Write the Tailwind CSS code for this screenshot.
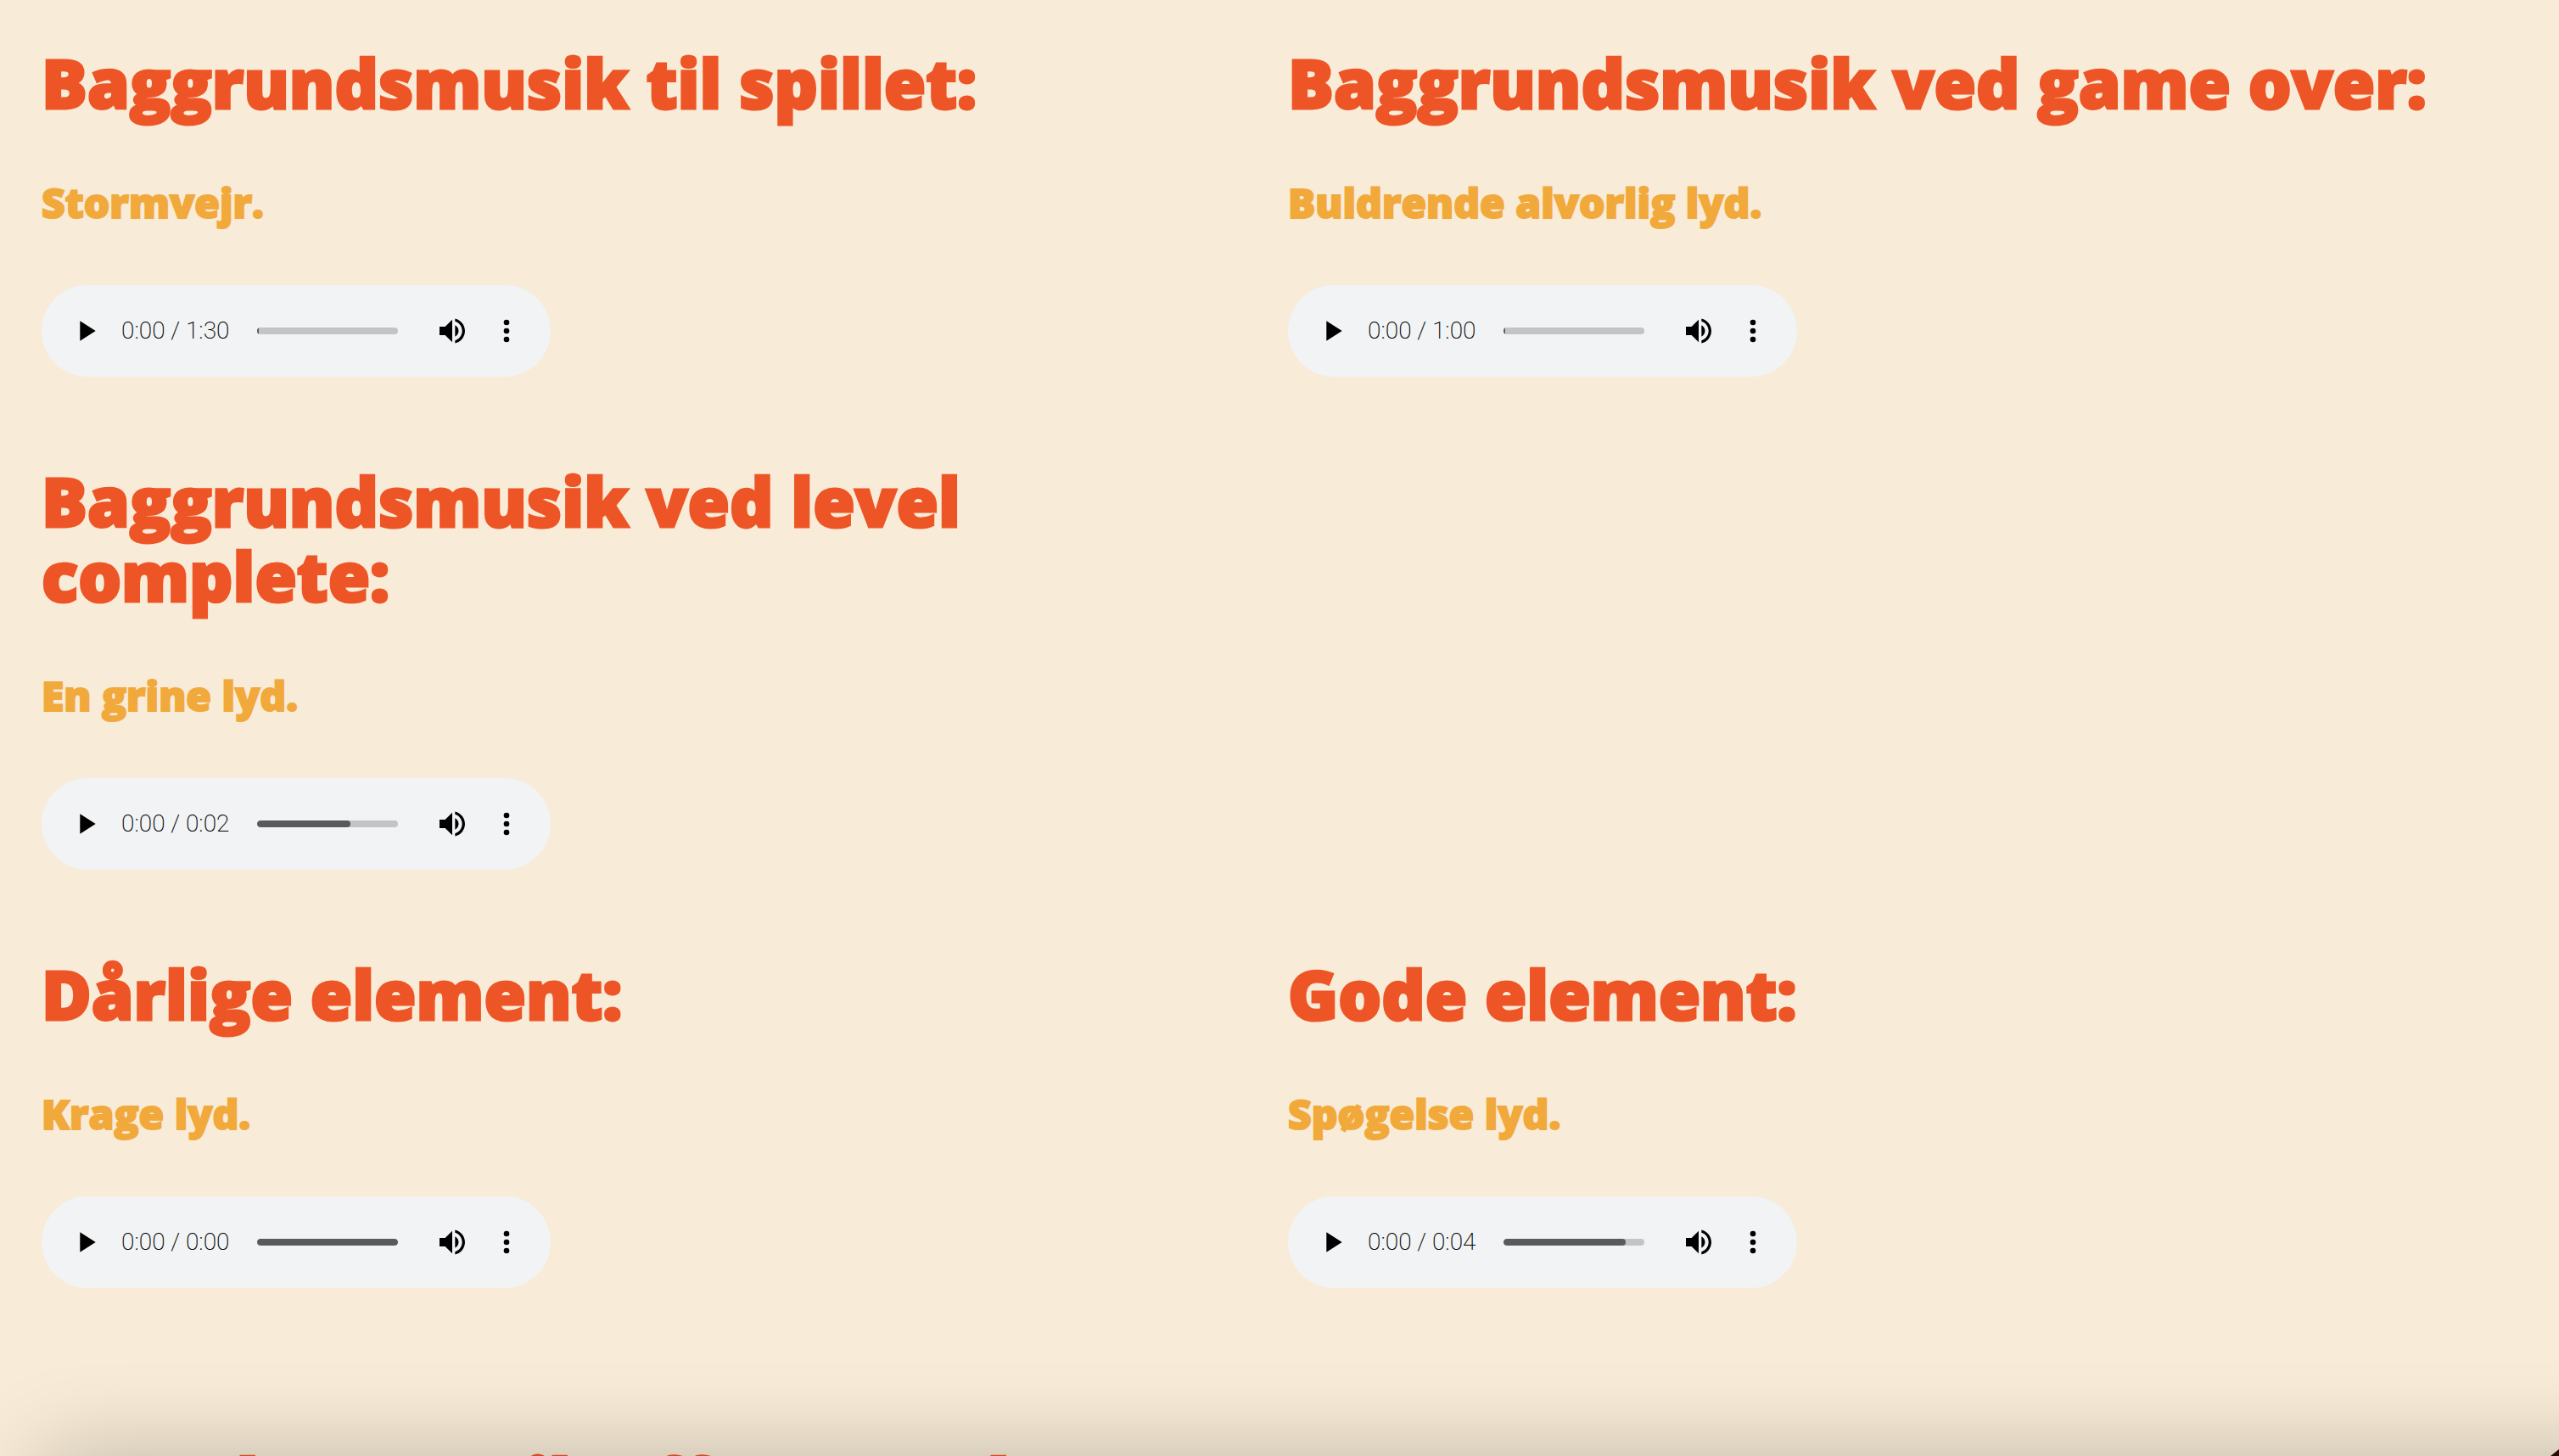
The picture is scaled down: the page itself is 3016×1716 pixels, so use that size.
<!DOCTYPE html>
<html lang="da">
<head>
<meta charset="utf-8">
<title>Lyde</title>
<script src="https://cdn.jsdelivr.net/npm/@tailwindcss/browser@4"></script>
</head>
<body class="bg-[#f8ebd7]">
<svg class="hidden" aria-hidden="true">
  <symbol id="play" viewBox="0 0 24 24"><path d="M8 5v14l11-7z"/></symbol>
  <symbol id="volume" viewBox="0 0 24 24"><path d="M3 9v6h4l5 5V4L7 9H3zm13.5 3c0-1.77-1.02-3.29-2.5-4.03v8.05c1.48-.73 2.5-2.25 2.5-4.02zM14 3.23v2.06c2.89.86 5 3.54 5 6.71s-2.11 5.85-5 6.71v2.06c4.01-.91 7-4.49 7-8.77s-2.99-7.86-7-8.77z"/></symbol>
  <symbol id="more" viewBox="0 0 24 24"><circle cx="12" cy="6" r="2"/><circle cx="12" cy="12" r="2"/><circle cx="12" cy="18" r="2"/></symbol>
</svg>

<main class="relative flex h-screen flex-col gap-[102px] overflow-hidden px-[49px] pt-[53px] font-['Open_Sans',sans-serif] font-extrabold">
  <div class="grid shrink-0 grid-cols-2 gap-x-5">
    <section>
      <h2 class="text-[80px] leading-[88px] text-[#ee5526] [-webkit-text-stroke:3px_#ee5526]">Baggrundsmusik til spillet:</h2>
      <p class="mt-[70px] text-[48px] leading-14 text-[#f2a93b] [-webkit-text-stroke:2px_#f2a93b]">Stormvejr.</p>
      <div class="mt-[69px] flex h-27 w-150 items-center rounded-full bg-[#f1f3f4] px-8">
        <button aria-label="Afspil"><svg class="size-10"><use href="#play"/></svg></button>
        <span class="ml-[22px] w-32 whitespace-nowrap font-[Roboto,sans-serif] text-[28px] font-extralight">0:00 / 1:30</span>
        <div class="relative ml-8 h-2 flex-1 overflow-hidden rounded-full bg-[#c3c4c5]">
          <div class="h-full bg-[#5a5a5a]" style="width:1%"></div>
          <input type="range" value="0" aria-label="Position" class="absolute inset-0 w-full opacity-0">
        </div>
        <button class="ml-11" aria-label="Lydstyrke"><svg class="size-10"><use href="#volume"/></svg></button>
        <button class="ml-6" aria-label="Flere valg"><svg class="size-10"><use href="#more"/></svg></button>
      </div>
    </section>
    <section>
      <h2 class="text-[80px] leading-[88px] text-[#ee5526] [-webkit-text-stroke:3px_#ee5526]">Baggrundsmusik ved game over:</h2>
      <p class="mt-[70px] text-[48px] leading-14 text-[#f2a93b] [-webkit-text-stroke:2px_#f2a93b]">Buldrende alvorlig lyd.</p>
      <div class="mt-[69px] flex h-27 w-150 items-center rounded-full bg-[#f1f3f4] px-8">
        <button aria-label="Afspil"><svg class="size-10"><use href="#play"/></svg></button>
        <span class="ml-[22px] w-32 whitespace-nowrap font-[Roboto,sans-serif] text-[28px] font-extralight">0:00 / 1:00</span>
        <div class="relative ml-8 h-2 flex-1 overflow-hidden rounded-full bg-[#c3c4c5]">
          <div class="h-full bg-[#5a5a5a]" style="width:1%"></div>
          <input type="range" value="0" aria-label="Position" class="absolute inset-0 w-full opacity-0">
        </div>
        <button class="ml-11" aria-label="Lydstyrke"><svg class="size-10"><use href="#volume"/></svg></button>
        <button class="ml-6" aria-label="Flere valg"><svg class="size-10"><use href="#more"/></svg></button>
      </div>
    </section>
  </div>

  <div class="grid shrink-0 grid-cols-2 gap-x-5">
    <section>
      <h2 class="text-[80px] leading-[88px] text-[#ee5526] [-webkit-text-stroke:3px_#ee5526]">Baggrundsmusik ved level complete:</h2>
      <p class="mt-[70px] text-[48px] leading-14 text-[#f2a93b] [-webkit-text-stroke:2px_#f2a93b]">En grine lyd.</p>
      <div class="mt-[69px] flex h-27 w-150 items-center rounded-full bg-[#f1f3f4] px-8">
        <button aria-label="Afspil"><svg class="size-10"><use href="#play"/></svg></button>
        <span class="ml-[22px] w-32 whitespace-nowrap font-[Roboto,sans-serif] text-[28px] font-extralight">0:00 / 0:02</span>
        <div class="relative ml-8 h-2 flex-1 overflow-hidden rounded-full bg-[#c3c4c5]">
          <div class="h-full rounded-full bg-[#5a5a5a]" style="width:66%"></div>
          <input type="range" value="0" aria-label="Position" class="absolute inset-0 w-full opacity-0">
        </div>
        <button class="ml-11" aria-label="Lydstyrke"><svg class="size-10"><use href="#volume"/></svg></button>
        <button class="ml-6" aria-label="Flere valg"><svg class="size-10"><use href="#more"/></svg></button>
      </div>
    </section>
  </div>

  <div class="grid shrink-0 grid-cols-2 gap-x-5">
    <section>
      <h2 class="text-[80px] leading-[88px] text-[#ee5526] [-webkit-text-stroke:3px_#ee5526]">Dårlige element:</h2>
      <p class="mt-[70px] text-[48px] leading-14 text-[#f2a93b] [-webkit-text-stroke:2px_#f2a93b]">Krage lyd.</p>
      <div class="mt-[69px] flex h-27 w-150 items-center rounded-full bg-[#f1f3f4] px-8">
        <button aria-label="Afspil"><svg class="size-10"><use href="#play"/></svg></button>
        <span class="ml-[22px] w-32 whitespace-nowrap font-[Roboto,sans-serif] text-[28px] font-extralight">0:00 / 0:00</span>
        <div class="relative ml-8 h-2 flex-1 overflow-hidden rounded-full bg-[#c3c4c5]">
          <div class="h-full rounded-full bg-[#5a5a5a]" style="width:100%"></div>
          <input type="range" value="0" aria-label="Position" class="absolute inset-0 w-full opacity-0">
        </div>
        <button class="ml-11" aria-label="Lydstyrke"><svg class="size-10"><use href="#volume"/></svg></button>
        <button class="ml-6" aria-label="Flere valg"><svg class="size-10"><use href="#more"/></svg></button>
      </div>
    </section>
    <section>
      <h2 class="text-[80px] leading-[88px] text-[#ee5526] [-webkit-text-stroke:3px_#ee5526]">Gode element:</h2>
      <p class="mt-[70px] text-[48px] leading-14 text-[#f2a93b] [-webkit-text-stroke:2px_#f2a93b]">Spøgelse lyd.</p>
      <div class="mt-[69px] flex h-27 w-150 items-center rounded-full bg-[#f1f3f4] px-8">
        <button aria-label="Afspil"><svg class="size-10"><use href="#play"/></svg></button>
        <span class="ml-[22px] w-32 whitespace-nowrap font-[Roboto,sans-serif] text-[28px] font-extralight">0:00 / 0:04</span>
        <div class="relative ml-8 h-2 flex-1 overflow-hidden rounded-full bg-[#c3c4c5]">
          <div class="h-full rounded-full bg-[#5a5a5a]" style="width:87%"></div>
          <input type="range" value="0" aria-label="Position" class="absolute inset-0 w-full opacity-0">
        </div>
        <button class="ml-11" aria-label="Lydstyrke"><svg class="size-10"><use href="#volume"/></svg></button>
        <button class="ml-6" aria-label="Flere valg"><svg class="size-10"><use href="#more"/></svg></button>
      </div>
    </section>
  </div>

  <h2 class="mt-[82px] shrink-0 text-[80px] leading-[88px] text-[#ee5526] [-webkit-text-stroke:3px_#ee5526]">Sound og musik offer som der er et:</h2>

  <!-- shadow cast upwards by the window below the page -->
  <div class="pointer-events-none absolute top-full -right-40 left-12 h-40 shadow-[0_0_110px_rgb(0_0_0/0.23)]"></div>
  <svg class="absolute right-0 bottom-0 h-2 w-2.5" viewBox="0 0 10 8" aria-hidden="true"><path d="M0 8 10 0V8z" fill="#2a0c08"/></svg>
</main>
</body>
</html>
